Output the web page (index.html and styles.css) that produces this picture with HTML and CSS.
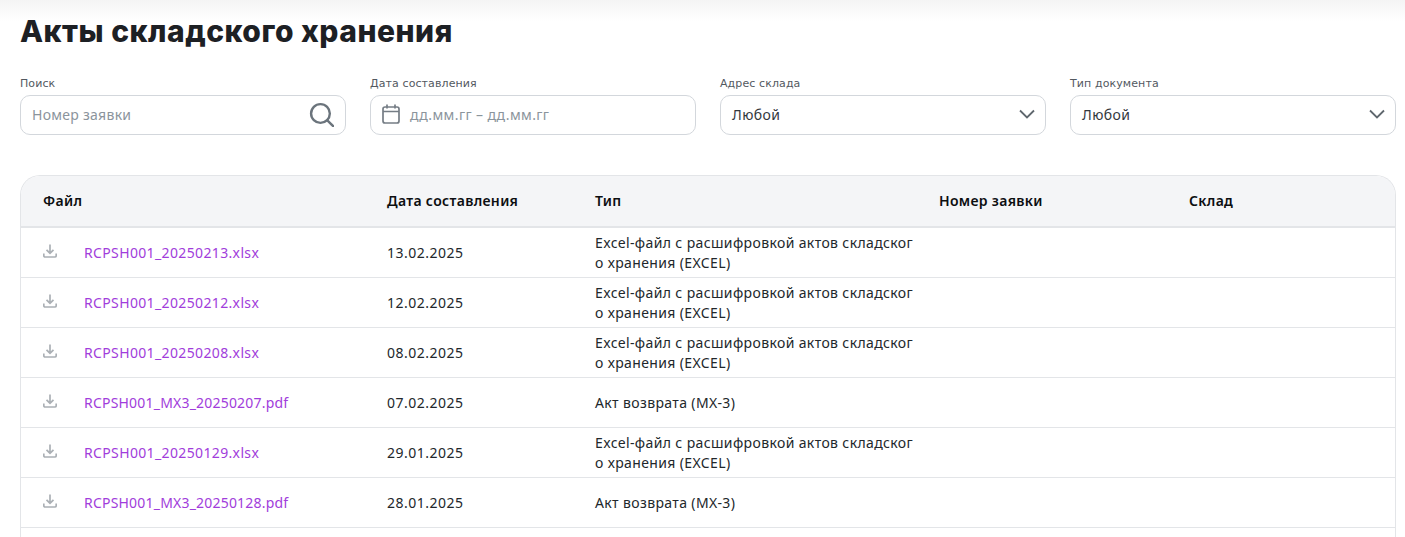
FILE: index.html
```
<!DOCTYPE html>
<html lang="ru">
<head>
<meta charset="utf-8">
<title>Акты складского хранения</title>
<link rel="stylesheet" href="styles.css">
</head>
<body>
<div class="page">
  <h1 class="title">Акты складского хранения</h1>
  <div class="filters">
    <div class="field">
      <label class="label">Поиск</label>
      <div class="control">
        <span class="placeholder">Номер заявки</span>
        <svg class="icon-search" viewBox="0 0 24 24" width="25" height="25" fill="none" stroke="#6b747c" stroke-width="2.3"><circle cx="11" cy="11" r="9"/><path d="M17.6 17.6l6 6" stroke-linecap="round"/></svg>
      </div>
    </div>
    <div class="field">
      <label class="label">Дата составления</label>
      <div class="control control-date">
        <svg viewBox="0 0 18 20" width="18" height="20" fill="none" stroke="#757d85" stroke-width="1.7"><rect x="1" y="3" width="16" height="16" rx="2"/><path d="M1 7.5h16M5 .5v4M13 .5v4"/></svg>
        <span class="placeholder placeholder-date">дд.мм.гг – дд.мм.гг</span>
      </div>
    </div>
    <div class="field">
      <label class="label">Адрес склада</label>
      <div class="control">
        <span class="value">Любой</span>
        <svg viewBox="0 0 16 10" width="16" height="10" fill="none" stroke="#5f676e" stroke-width="1.8"><path d="M1 1.5l7 7 7-7"/></svg>
      </div>
    </div>
    <div class="field">
      <label class="label">Тип документа</label>
      <div class="control">
        <span class="value">Любой</span>
        <svg viewBox="0 0 16 10" width="16" height="10" fill="none" stroke="#5f676e" stroke-width="1.8"><path d="M1 1.5l7 7 7-7"/></svg>
      </div>
    </div>
  </div>

  <div class="table-wrap">
    <table class="table">
      <colgroup><col class="c1"><col class="c2"><col class="c3"><col class="c4"><col class="c5"></colgroup>
      <thead>
        <tr><th>Файл</th><th>Дата составления</th><th>Тип</th><th>Номер заявки</th><th>Склад</th></tr>
      </thead>
      <tbody>
        <tr><td><div class="file"><svg class="dl" viewBox="0 0 14 14" width="14" height="14" fill="none" stroke="#abb0b5" stroke-width="1.7"><path d="M7 .5v8.5M3.5 5.8L7 9.2l3.5-3.4M.8 9.5v2.2a1.3 1.3 0 0 0 1.3 1.3h9.8a1.3 1.3 0 0 0 1.3-1.3V9.5"/></svg><a class="link">RCPSH001_20250213.xlsx</a></div></td><td class="date">13.02.2025</td><td class="type">Excel-файл с расшифровкой актов складского хранения (EXCEL)</td><td></td><td></td></tr>
        <tr><td><div class="file"><svg class="dl" viewBox="0 0 14 14" width="14" height="14" fill="none" stroke="#abb0b5" stroke-width="1.7"><path d="M7 .5v8.5M3.5 5.8L7 9.2l3.5-3.4M.8 9.5v2.2a1.3 1.3 0 0 0 1.3 1.3h9.8a1.3 1.3 0 0 0 1.3-1.3V9.5"/></svg><a class="link">RCPSH001_20250212.xlsx</a></div></td><td class="date">12.02.2025</td><td class="type">Excel-файл с расшифровкой актов складского хранения (EXCEL)</td><td></td><td></td></tr>
        <tr><td><div class="file"><svg class="dl" viewBox="0 0 14 14" width="14" height="14" fill="none" stroke="#abb0b5" stroke-width="1.7"><path d="M7 .5v8.5M3.5 5.8L7 9.2l3.5-3.4M.8 9.5v2.2a1.3 1.3 0 0 0 1.3 1.3h9.8a1.3 1.3 0 0 0 1.3-1.3V9.5"/></svg><a class="link">RCPSH001_20250208.xlsx</a></div></td><td class="date">08.02.2025</td><td class="type">Excel-файл с расшифровкой актов складского хранения (EXCEL)</td><td></td><td></td></tr>
        <tr><td><div class="file"><svg class="dl" viewBox="0 0 14 14" width="14" height="14" fill="none" stroke="#abb0b5" stroke-width="1.7"><path d="M7 .5v8.5M3.5 5.8L7 9.2l3.5-3.4M.8 9.5v2.2a1.3 1.3 0 0 0 1.3 1.3h9.8a1.3 1.3 0 0 0 1.3-1.3V9.5"/></svg><a class="link link-pdf">RCPSH001_MX3_20250207.pdf</a></div></td><td class="date">07.02.2025</td><td class="type">Акт возврата (МХ-3)</td><td></td><td></td></tr>
        <tr><td><div class="file"><svg class="dl" viewBox="0 0 14 14" width="14" height="14" fill="none" stroke="#abb0b5" stroke-width="1.7"><path d="M7 .5v8.5M3.5 5.8L7 9.2l3.5-3.4M.8 9.5v2.2a1.3 1.3 0 0 0 1.3 1.3h9.8a1.3 1.3 0 0 0 1.3-1.3V9.5"/></svg><a class="link">RCPSH001_20250129.xlsx</a></div></td><td class="date">29.01.2025</td><td class="type">Excel-файл с расшифровкой актов складского хранения (EXCEL)</td><td></td><td></td></tr>
        <tr><td><div class="file"><svg class="dl" viewBox="0 0 14 14" width="14" height="14" fill="none" stroke="#abb0b5" stroke-width="1.7"><path d="M7 .5v8.5M3.5 5.8L7 9.2l3.5-3.4M.8 9.5v2.2a1.3 1.3 0 0 0 1.3 1.3h9.8a1.3 1.3 0 0 0 1.3-1.3V9.5"/></svg><a class="link link-pdf">RCPSH001_MX3_20250128.pdf</a></div></td><td class="date">28.01.2025</td><td class="type">Акт возврата (МХ-3)</td><td></td><td></td></tr>
        <tr><td></td><td></td><td></td><td></td><td></td></tr>
      </tbody>
    </table>
  </div>
</div>
</body>
</html>
```
FILE: styles.css
```
* { box-sizing: border-box; }
html, body { margin: 0; height: 537px; overflow: hidden; background: #fff; }
body { font-family: "Noto Sans", sans-serif; color: #22272b; }
.page {
  height: 537px;
  overflow: hidden;
  padding: 11px 9px 0 20px;
  background: linear-gradient(#f4f4f4 0, #fff 22px) no-repeat;
}
.title {
  margin: 0;
  font-family: Inter, sans-serif;
  font-size: 30px;
  line-height: 40px;
  font-weight: 800;
  color: #1d2024;
  letter-spacing: .5px;
}
.filters {
  display: grid;
  grid-template-columns: repeat(4, 326px);
  gap: 24px;
  margin-top: 25px;
}
.label {
  display: block;
  font-family: "DejaVu Sans", sans-serif;
  font-size: 11px;
  line-height: 16px;
  color: #53595f;
  margin-bottom: 3px;
  letter-spacing: .1px;
}
.control {
  height: 40px;
  display: flex;
  align-items: center;
  justify-content: space-between;
  padding: 0 10px 2px 11px;
  border: 1px solid #d3d7dc;
  border-radius: 10px;
  background: #fff;
}
.icon-search { margin-right: 1px; }
.control-date { justify-content: flex-start; gap: 10px; }
.placeholder { font-size: 14px; letter-spacing: .27px; color: #8b949c; }
.placeholder-date { letter-spacing: .39px; }
.value { font-size: 14px; letter-spacing: .4px; color: #33383d; }
.table-wrap {
  margin-top: 40px;
  border: 1px solid #e3e5e8;
  border-bottom: 0;
  border-radius: 20px 20px 0 0;
  overflow: hidden;
}
.table { width: 100%; border-collapse: collapse; table-layout: fixed; font-size: 14px; }
.c1 { width: 344px; }
.c2 { width: 208px; }
.c3 { width: 344px; }
.c4 { width: 250px; }
th {
  height: 51px;
  padding: 0 22px 2px;
  text-align: left;
  font-weight: 600;
  font-size: 14px;
  letter-spacing: .32px;
  color: #0c0e10;
  background: #f4f5f7;
  border-bottom: 2px solid #e3e5e8;
}
td {
  height: 50px;
  padding: 2px 22px 0;
  line-height: 20px;
  color: #22272b;
  border-bottom: 1px solid #e3e5e8;
  vertical-align: middle;
}
.date { letter-spacing: .5px; }
.type { padding-right: 0; word-break: break-all; letter-spacing: .37px; }
.file { display: flex; align-items: center; gap: 27px; }
.dl { margin-top: -4px; }
.link { color: #a13ddb; letter-spacing: .36px; }
.link-pdf { letter-spacing: .2px; }
```
